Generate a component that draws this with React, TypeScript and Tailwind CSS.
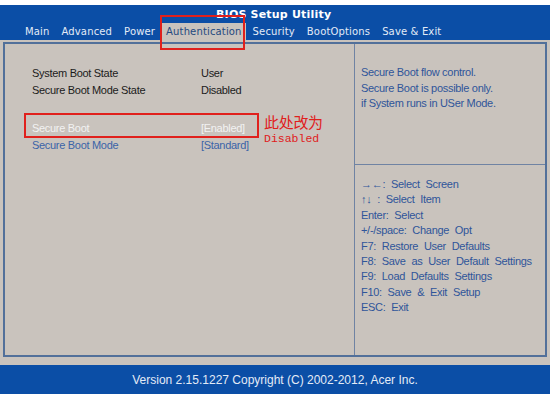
const tabs = ["Main", "Advanced", "Power", "Authentication", "Security", "BootOptions", "Save & Exit"];

const help = [
  "\u2192\u2190: Select Screen",
  "\u2191\u2193 : Select Item",
  "Enter: Select",
  "+/-/space: Change Opt",
  "F7: Restore User Defaults",
  "F8: Save as User Default Settings",
  "F9: Load Defaults Settings",
  "F10: Save & Exit Setup",
  "ESC: Exit",
];

function Row({ label, value, className }: { label: string; value: string; className: string }) {
  return (
    <div className={`flex h-[17px] items-center ${className}`}>
      <span className="w-[169px]">{label}</span>
      <span>{value}</span>
    </div>
  );
}

export default function App() {
  return (
    <div className="flex h-[394px] w-[550px] flex-col overflow-hidden bg-white font-['Liberation_Sans',Arial,sans-serif]">
      <div className="h-[5px] bg-white" />
      {/* header */}
      <div className="flex h-[35px] flex-col bg-[#0b4ea6] font-['DejaVu_Sans',sans-serif]">
        <div className="pt-[3px] pl-[216px] text-[11px] font-bold leading-[14px] tracking-[0.2px] text-white">
          BIOS Setup Utility
        </div>
        <div className="mt-[1px] flex pl-[19px] text-[10px] leading-[17px] tracking-[0.15px] text-[#e3ebf6]">
          {tabs.map((t) =>
            t === "Authentication" ? (
              <div key={t} className="relative mx-[1px] bg-[#c9c3bd] px-[4px] text-[#24497f]">
                {t}
                <div className="absolute -top-[8px] -left-[2px] h-[35px] w-[85px] border-2 border-[#e0201c]" />
              </div>
            ) : (
              <div key={t} className="px-[6px]">
                {t}
              </div>
            )
          )}
        </div>
      </div>
      {/* body */}
      <div className="flex-1 bg-[#c9c3bd] px-[3px] pt-[2px] pb-[8px]">
        <div className="flex h-full border-2 border-[#52709a]">
          <div className="relative w-[350px] border-r border-[#6f83a3] pt-[21px] pl-[27px] text-[11px] tracking-[-0.3px]">
            <Row label="System Boot State" value="User" className="text-[#1b1b1b]" />
            <Row label="Secure Boot Mode State" value="Disabled" className="text-[#1b1b1b]" />
            <div className="h-[21px]" />
            <Row label="Secure Boot" value="[Enabled]" className="text-[#f2f2f2]" />
            <Row label="Secure Boot Mode" value="[Standard]" className="text-[#3b64a8]" />
            <div className="absolute top-[69px] left-[19px] h-[25px] w-[235px] border-2 border-[#e0201c]" />
            <div className="absolute top-[69px] left-[259px] text-[15px] leading-[18px] text-[#e0201c] font-['Noto_Sans_CJK_SC',sans-serif]">
              此处改为
            </div>
            <div className="absolute top-[88px] left-[259px] text-[11.5px] leading-[13px] tracking-[0px] text-[#e0201c] font-['Liberation_Mono',monospace]">
              Disabled
            </div>
          </div>
          <div className="flex flex-1 flex-col text-[11px] tracking-[-0.3px] text-[#2f559a]">
            <div className="h-[121px] border-b border-[#6f83a3] pt-[21px] pl-[6px] leading-[15.5px]">
              <div>Secure Boot flow control.</div>
              <div>Secure Boot is possible only.</div>
              <div>if System runs in USer Mode.</div>
            </div>
            <div className="pt-[12px] pl-[6px] leading-[15.4px] [word-spacing:3px]">
              {help.map((h) => (
                <div key={h}>{h}</div>
              ))}
            </div>
          </div>
        </div>
      </div>
      {/* footer */}
      <div className="flex h-[29px] items-center justify-center bg-[#0b4ea6] text-[12px] text-[#e3ebf6]">
        Version 2.15.1227 Copyright (C) 2002-2012, Acer Inc.
      </div>
    </div>
  );
}
